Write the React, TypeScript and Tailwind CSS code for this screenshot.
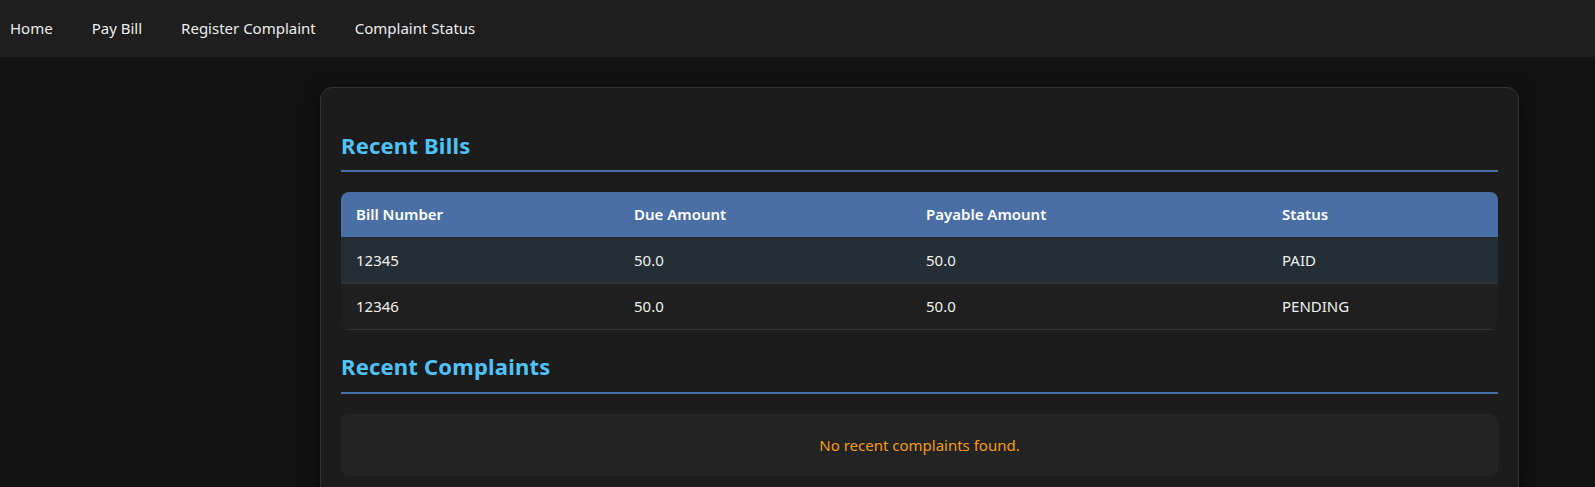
import React from "react";

const bills = [
  { no: "12345", due: "50.0", pay: "50.0", status: "PAID" },
  { no: "12346", due: "50.0", pay: "50.0", status: "PENDING" },
];

export default function App() {
  return (
    <div
      className="min-h-[487px] w-full bg-[#121212] text-[#e0e0e0] overflow-hidden"
      style={{ fontFamily: '"Noto Sans", "Open Sans", sans-serif' }}
    >
      <nav className="h-[57px] bg-[#1e1e1e] flex items-center pl-[10px] gap-[39px] pb-[1px] text-[15px] text-[#ececec]">
        <span>Home</span>
        <span>Pay Bill</span>
        <span>Register Complaint</span>
        <span>Complaint Status</span>
      </nav>
      <div className="pl-[320px] pt-[30px]">
        <div className="w-[1199px] rounded-[12px] border border-[#333333] bg-[#1c1c1c] px-[20px] pt-[20px] pb-[20px] shadow-[0_4px_20px_rgba(0,0,0,0.5)]">
          <h2 className="mt-[21px] mb-[20px] pb-[8px] border-b-2 border-[#4a6fa5] text-[22px] leading-[33px] font-bold tracking-[0.2px] text-[#4fc3f7]">
            Recent Bills
          </h2>
          <div className="rounded-[8px] overflow-hidden">
            <table className="w-full table-fixed border-collapse text-[15px]">
              <colgroup>
                <col className="w-[278px]" />
                <col className="w-[292px]" />
                <col className="w-[356px]" />
                <col />
              </colgroup>
              <thead>
                <tr className="bg-[#4a6fa5] text-white">
                  <th className="text-left font-semibold px-[15px] h-[45px]">Bill Number</th>
                  <th className="text-left font-semibold px-[15px] h-[45px]">Due Amount</th>
                  <th className="text-left font-semibold px-[15px] h-[45px]">Payable Amount</th>
                  <th className="text-left font-semibold px-[15px] h-[45px]">Status</th>
                </tr>
              </thead>
              <tbody>
                {bills.map((b, i) => (
                  <tr
                    key={b.no}
                    className={
                      (i === 0 ? "bg-[#252e35]" : "bg-[#1f1f1f]") +
                      " border-b border-[#333333] text-[#f0f0f0]"
                    }
                  >
                    <td className="px-[15px] h-[46px]">{b.no}</td>
                    <td className="px-[15px] h-[46px]">{b.due}</td>
                    <td className="px-[15px] h-[46px]">{b.pay}</td>
                    <td className="px-[15px] h-[46px]">{b.status}</td>
                  </tr>
                ))}
              </tbody>
            </table>
          </div>
          <h2 className="mt-[20px] mb-[20px] pb-[9px] border-b-2 border-[#4a6fa5] text-[22px] leading-[33px] font-bold tracking-[0.2px] text-[#4fc3f7]">
            Recent Complaints
          </h2>
          <div className="rounded-[8px] bg-[#232323] py-[20px] text-center text-[15px] leading-[22px] text-[#f39c12]">
            No recent complaints found.
          </div>
        </div>
      </div>
    </div>
  );
}
